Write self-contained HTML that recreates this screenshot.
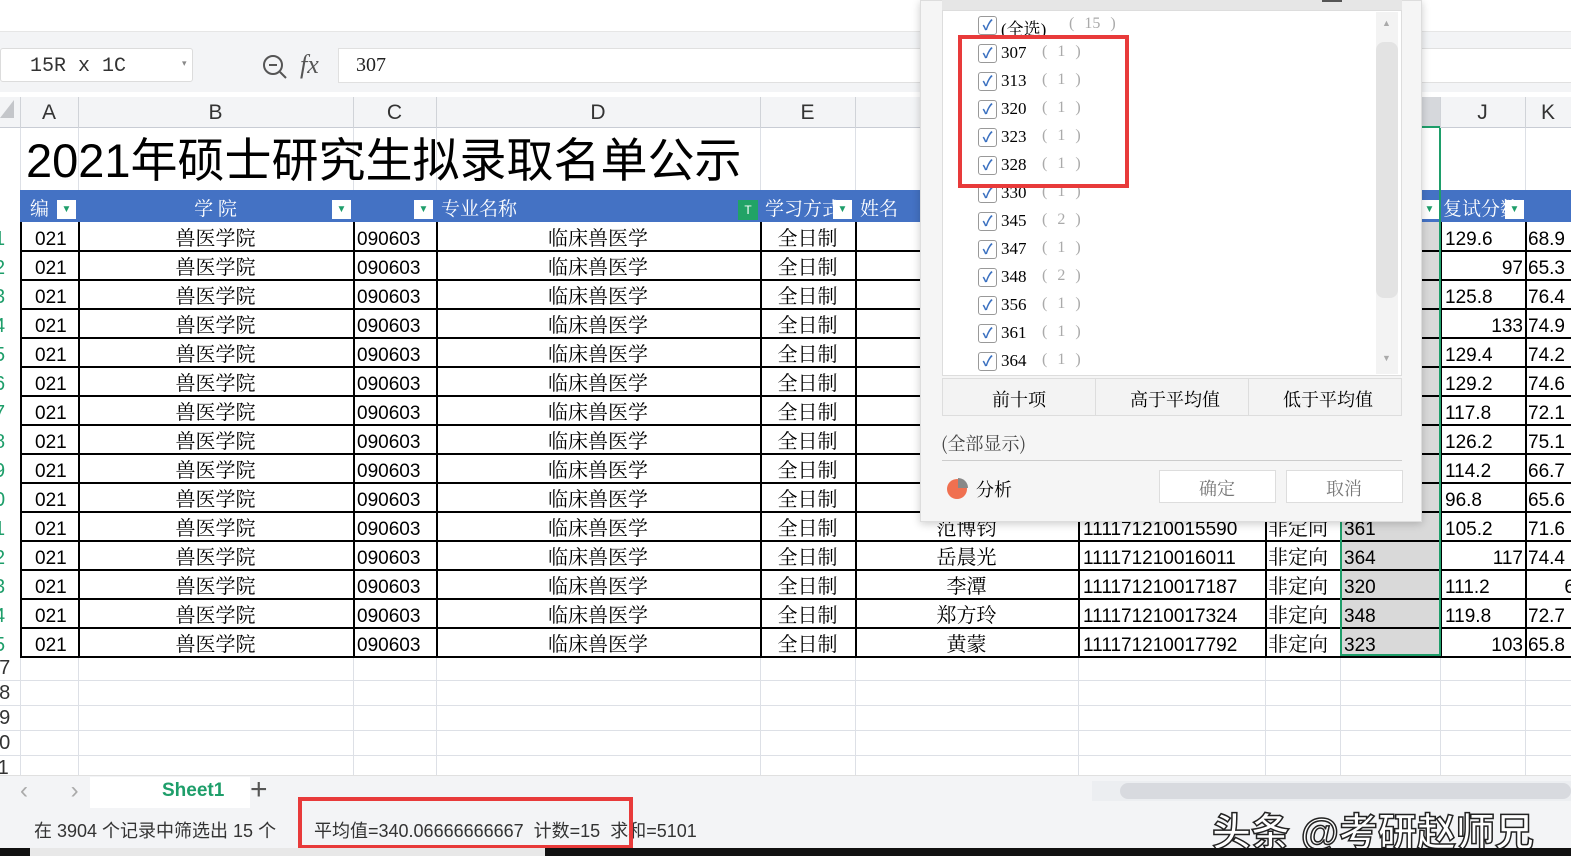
<!DOCTYPE html><html><head><meta charset="utf-8"><style>
*{margin:0;padding:0;box-sizing:border-box}
body{width:1571px;height:856px;overflow:hidden;background:#fff;font-family:"Liberation Sans","Noto Sans CJK SC",sans-serif;position:relative}
.a{position:absolute}
.c{position:absolute;font-size:19px;white-space:nowrap;line-height:29px}
.cn{font-family:"Noto Serif CJK SC","Liberation Serif",serif}
</style></head><body>
<div class="a" style="left:0;top:0;width:1571px;height:32px;background:#fff;border-bottom:1px solid #e6e6e6"></div>
<div class="a" style="left:975px;top:0;width:45px;height:10px;background:#e2e4e8"></div>
<div class="a" style="left:0;top:32px;width:1571px;height:60px;background:#f3f4f6"></div>
<div class="a" style="left:0;top:48px;width:193px;height:34px;background:#fff;border:1px solid #dcdcdc;border-radius:3px"></div>
<div class="a" style="left:30px;top:55px;font-size:20px;font-family:'Liberation Mono',monospace;color:#333">15R x 1C</div>
<div class="a" style="left:182px;top:58px;font-size:9px;color:#888">▾</div>
<svg class="a" style="left:260px;top:52px" width="30" height="30"><circle cx="13" cy="13" r="9" fill="none" stroke="#555" stroke-width="2"/><line x1="9" y1="13" x2="17" y2="13" stroke="#555" stroke-width="2"/><line x1="20" y1="20" x2="26" y2="26" stroke="#555" stroke-width="2"/></svg>
<div class="a" style="left:300px;top:50px;font-size:26px;font-style:italic;font-family:'Liberation Serif',serif;color:#555">fx</div>
<div class="a" style="left:338px;top:48px;width:1240px;height:35px;background:#fff;border:1px solid #e0e0e0"></div>
<div class="a" style="left:356px;top:54px;font-size:20px;font-family:'Liberation Serif',serif;color:#222">307</div>
<div class="a" style="left:0;top:97px;width:1571px;height:31px;background:#f3f4f6;border-bottom:1px solid #c8ccd4"></div>
<div class="a" style="left:1340px;top:97px;width:100px;height:31px;background:#d6d8dc;border-bottom:2px solid #1e9e6a"></div>
<div class="a" style="left:0;top:100px;width:0;height:0;border-left:14px solid transparent;border-bottom:18px solid #c4c6ca"></div>
<div id="g"></div>
<div class="a" style="left:26px;top:133px;font-size:47px;color:#000;line-height:56px">2021年硕士研究生拟录取名单公示</div>
<div class="a" style="left:20px;top:190px;width:1551px;height:32px;background:#4472c4"></div>
<div id="h"></div>
<div id="d"></div>
<div class="a" style="left:0;top:775px;width:1571px;height:33px;background:#f3f4f6;border-top:1px solid #e0e0e0"></div>
<div class="a" style="left:20px;top:777px;font-size:24px;color:#aaa;letter-spacing:18px">‹ › ›|</div>
<div class="a" style="left:90px;top:777px;width:160px;height:31px;background:#fff"></div>
<div class="a" style="left:162px;top:780px;font-size:19px;font-weight:bold;color:#1e9e6a">Sheet1</div>
<div class="a" style="left:250px;top:773px;font-size:30px;color:#555">+</div>
<div class="a" style="left:1092px;top:781px;width:479px;height:20px;background:#eceef1"></div>
<div class="a" style="left:1120px;top:783px;width:451px;height:16px;background:#d8dadf;border-radius:8px"></div>
<div class="a" style="left:0;top:808px;width:1571px;height:40px;background:#f3f4f6"></div>
<div class="a" style="left:34px;top:817px;font-size:18px;color:#333">在 3904 个记录中筛选出 15 个</div>
<div class="a" style="left:314px;top:817px;font-size:18px;color:#333">平均值=340.06666666667&nbsp; 计数=15&nbsp; 求和=5101</div>
<div class="a" style="left:298px;top:797px;width:335px;height:52px;border:4px solid #e83a3a"></div>
<div class="a" style="left:1212px;top:802px;font-size:39px;color:#fff;-webkit-text-stroke:1.5px #222;font-weight:bold">头条 @考研赵师兄</div>
<div class="a" style="left:0;top:848px;width:1571px;height:8px;background:#111"></div>
<div class="a" style="left:30px;top:848px;width:515px;height:8px;background:#e8e8e8"></div>
<div class="a" style="left:920px;top:0;width:502px;height:522px;background:#f5f5f5;border:1px solid #ddd;box-shadow:0 2px 8px rgba(0,0,0,.2)"></div>
<div class="a" style="left:942px;top:0;width:460px;height:10px;background:#e6e6e6"></div>
<div class="a" style="left:942px;top:10px;width:460px;height:366px;background:#fff;border:1px solid #ddd"></div>
<div class="a" style="left:1376px;top:12px;width:22px;height:362px;background:#f3f3f3"></div>
<div class="a" style="left:1376px;top:42px;width:22px;height:256px;background:#e3e3e3;border-radius:8px"></div>
<div class="a" style="left:1382px;top:18px;font-size:9px;color:#aaa">▲</div>
<div class="a" style="left:1382px;top:353px;font-size:9px;color:#aaa">▼</div>
<div class="a" style="left:1322px;top:0;width:20px;height:2px;background:#555"></div>
<div id="l"></div>
<div class="a" style="left:958px;top:35px;width:171px;height:153px;border:4px solid #e83a3a"></div>
<div class="a" style="left:942px;top:378px;width:460px;height:38px;background:#f3f3f3;border:1px solid #ddd"></div>
<div class="a" style="left:1095px;top:378px;width:1px;height:38px;background:#ddd"></div>
<div class="a" style="left:1248px;top:378px;width:1px;height:38px;background:#ddd"></div>
<div class="a cn" style="left:992px;top:386px;font-size:18px">前十项</div>
<div class="a cn" style="left:1130px;top:386px;font-size:18px">高于平均值</div>
<div class="a cn" style="left:1283px;top:386px;font-size:18px">低于平均值</div>
<div class="a cn" style="left:941px;top:430px;font-size:18px;color:#444">(全部显示)</div>
<div class="a" style="left:942px;top:460px;width:460px;height:1px;background:#ccc"></div>
<svg class="a" style="left:946px;top:476px" width="24" height="24"><circle cx="11" cy="13" r="10" fill="#f07050"/><path d="M12 2 A10 10 0 0 1 22 12 L12 12Z" fill="#888"/></svg>
<div class="a cn" style="left:976px;top:476px;font-size:18px">分析</div>
<div class="a" style="left:1159px;top:470px;width:117px;height:33px;background:#fff;border:1px solid #ddd"></div>
<div class="a" style="left:1286px;top:470px;width:117px;height:33px;background:#fff;border:1px solid #ddd"></div>
<div class="a cn" style="left:1199px;top:475px;font-size:18px;color:#777">确定</div>
<div class="a cn" style="left:1326px;top:475px;font-size:18px;color:#777">取消</div>
<script>
var cols=[[0,20,''],[20,78,'A'],[78,353,'B'],[353,436,'C'],[436,760,'D'],[760,855,'E'],[855,1078,'F'],[1078,1265,'G'],[1265,1340,'H'],[1340,1440,'I'],[1440,1525,'J'],[1525,1571,'K']];
var s='';
cols.forEach(function(c,i){if(i>0){s+='<div class="a" style="left:'+c[0]+'px;top:97px;width:1px;height:31px;background:#d0d3d8"></div>';s+='<div class="a" style="left:'+c[0]+'px;top:128px;width:1px;height:647px;background:#dde0e6"></div>';}
s+='<div class="a" style="left:'+c[0]+'px;top:101px;width:'+(c[1]-c[0])+'px;text-align:center;font-size:21px;color:#333">'+c[2]+'</div>';});
for(var y=680;y<775;y+=25)s+='<div class="a" style="left:0;top:'+y+'px;width:1571px;height:1px;background:#dde0e6"></div>';
['07','08','09','10','11'].forEach(function(n,i){s+='<div class="a" style="left:-12px;top:'+(657+i*25)+'px;font-size:20px;color:#333">'+n+'</div>';});
document.getElementById('g').innerHTML=s;
var h='';
function hd(x,t,w){h+='<div class="a cn" style="left:'+x+'px;top:194px;font-size:19px;color:#fff;'+(w?'width:'+w+'px;text-align:center':'')+'">'+t+'</div>';}
hd(30,'编');hd(78,'学 院',275);hd(441,'专业名称');hd(765,'学习方式');hd(860,'姓名');hd(1443,'复试分数');
[[57],[332],[414],[833],[1420],[1505]].forEach(function(p){h+='<div class="a" style="left:'+p[0]+'px;top:200px;width:19px;height:19px;background:#fff;color:#1e9e6a;font-size:10px;text-align:center;line-height:19px">▼</div>';});
h+='<div class="a" style="left:738px;top:200px;width:20px;height:20px;background:#21a366;color:#fff;font-size:12px;text-align:center;line-height:20px">T</div>';
document.getElementById('h').innerHTML=h;
var names=['','','','','','','','','','','范博钧','岳晨光','李潭','郑方玲','黄蒙'];
var ids=['','','','','','','','','','','111171210015590','111171210016011','111171210017187','111171210017324','111171210017792'];
var iv=['','','','','','','','','','','361','364','320','348','323'];
var J=['129.6','97','125.8','133','129.4','129.2','117.8','126.2','114.2','96.8','105.2','117','111.2','119.8','103'];
var K=['68.9','65.3','76.4','74.9','74.2','74.6','72.1','75.1','66.7','65.6','71.6','74.4','6','72.7','65.8'];
var d='<div class="a" style="left:1340px;top:222px;width:100px;height:433px;background:#d9d9d9"></div>';
for(var r=0;r<15;r++){var y=222+r*29,t=y+3;
d+='<div class="a" style="left:20px;top:'+(y+28)+'px;width:1551px;height:2px;background:#000"></div>';
d+='<div class="c" style="left:-6px;top:'+t+'px;color:#1e9e6a;font-size:20px">'+((r+1)%10)+'</div>';
d+='<div class="c" style="left:35px;top:'+t+'px">021</div>';
d+='<div class="c cn" style="left:78px;width:275px;text-align:center;top:'+y+'px;font-size:20px">兽医学院</div>';
d+='<div class="c" style="left:357px;top:'+t+'px">090603</div>';
d+='<div class="c cn" style="left:436px;width:324px;text-align:center;top:'+y+'px;font-size:20px">临床兽医学</div>';
d+='<div class="c cn" style="left:760px;width:95px;text-align:center;top:'+y+'px;font-size:20px">全日制</div>';
if(names[r]){d+='<div class="c cn" style="left:855px;width:223px;text-align:center;top:'+y+'px;font-size:20px">'+names[r]+'</div>';
d+='<div class="c" style="left:1083px;top:'+t+'px">'+ids[r]+'</div>';
d+='<div class="c cn" style="left:1268px;top:'+y+'px;font-size:20px">非定向</div>';
d+='<div class="c" style="left:1344px;top:'+t+'px">'+iv[r]+'</div>';}
var right=J[r].indexOf('.')<0;
d+='<div class="c" style="'+(right?'left:1440px;width:83px;text-align:right':'left:1445px')+';top:'+t+'px">'+J[r]+'</div>';
d+='<div class="c" style="'+(K[r].length<3?'left:1525px;width:50px;text-align:right':'left:1528px')+';top:'+t+'px">'+K[r]+'</div>';}
[20,78,353,436,760,855,1078,1265,1340,1440,1525].forEach(function(x){d+='<div class="a" style="left:'+x+'px;top:222px;width:2px;height:434px;background:#000"></div>';});
d+='<div class="a" style="left:1340px;top:128px;width:2px;height:528px;background:#1e9e6a"></div><div class="a" style="left:1439px;top:128px;width:2px;height:528px;background:#1e9e6a"></div><div class="a" style="left:1340px;top:654px;width:101px;height:2px;background:#1e9e6a"></div>';
document.getElementById('d').innerHTML=d;
var it=[['(全选)','15'],['307','1'],['313','1'],['320','1'],['323','1'],['328','1'],['330','1'],['345','2'],['347','1'],['348','2'],['356','1'],['361','1'],['364','1']];
var l='';it.forEach(function(t,i){var y=14+i*28;if(y>355)return;
l+='<div class="a" style="left:978px;top:'+(y+2)+'px;width:19px;height:19px;border:1px solid #999;border-radius:3px;background:#fff;color:#3a70c0;font-size:14px;text-align:center;line-height:17px;font-weight:bold">✓</div>';
l+='<div class="a" style="left:1001px;top:'+(y+1)+'px;font-size:17px;font-family:\'Liberation Serif\',\'Noto Serif CJK SC\',serif">'+t[0]+'</div>';
l+='<div class="a" style="left:'+(i?1042:1069)+'px;top:'+(y+1)+'px;font-size:16px;color:#aaa;font-family:\'Liberation Serif\',serif;word-spacing:6px">( '+t[1]+' )</div>';});
document.getElementById('l').innerHTML=l;
</script>
</body></html>
